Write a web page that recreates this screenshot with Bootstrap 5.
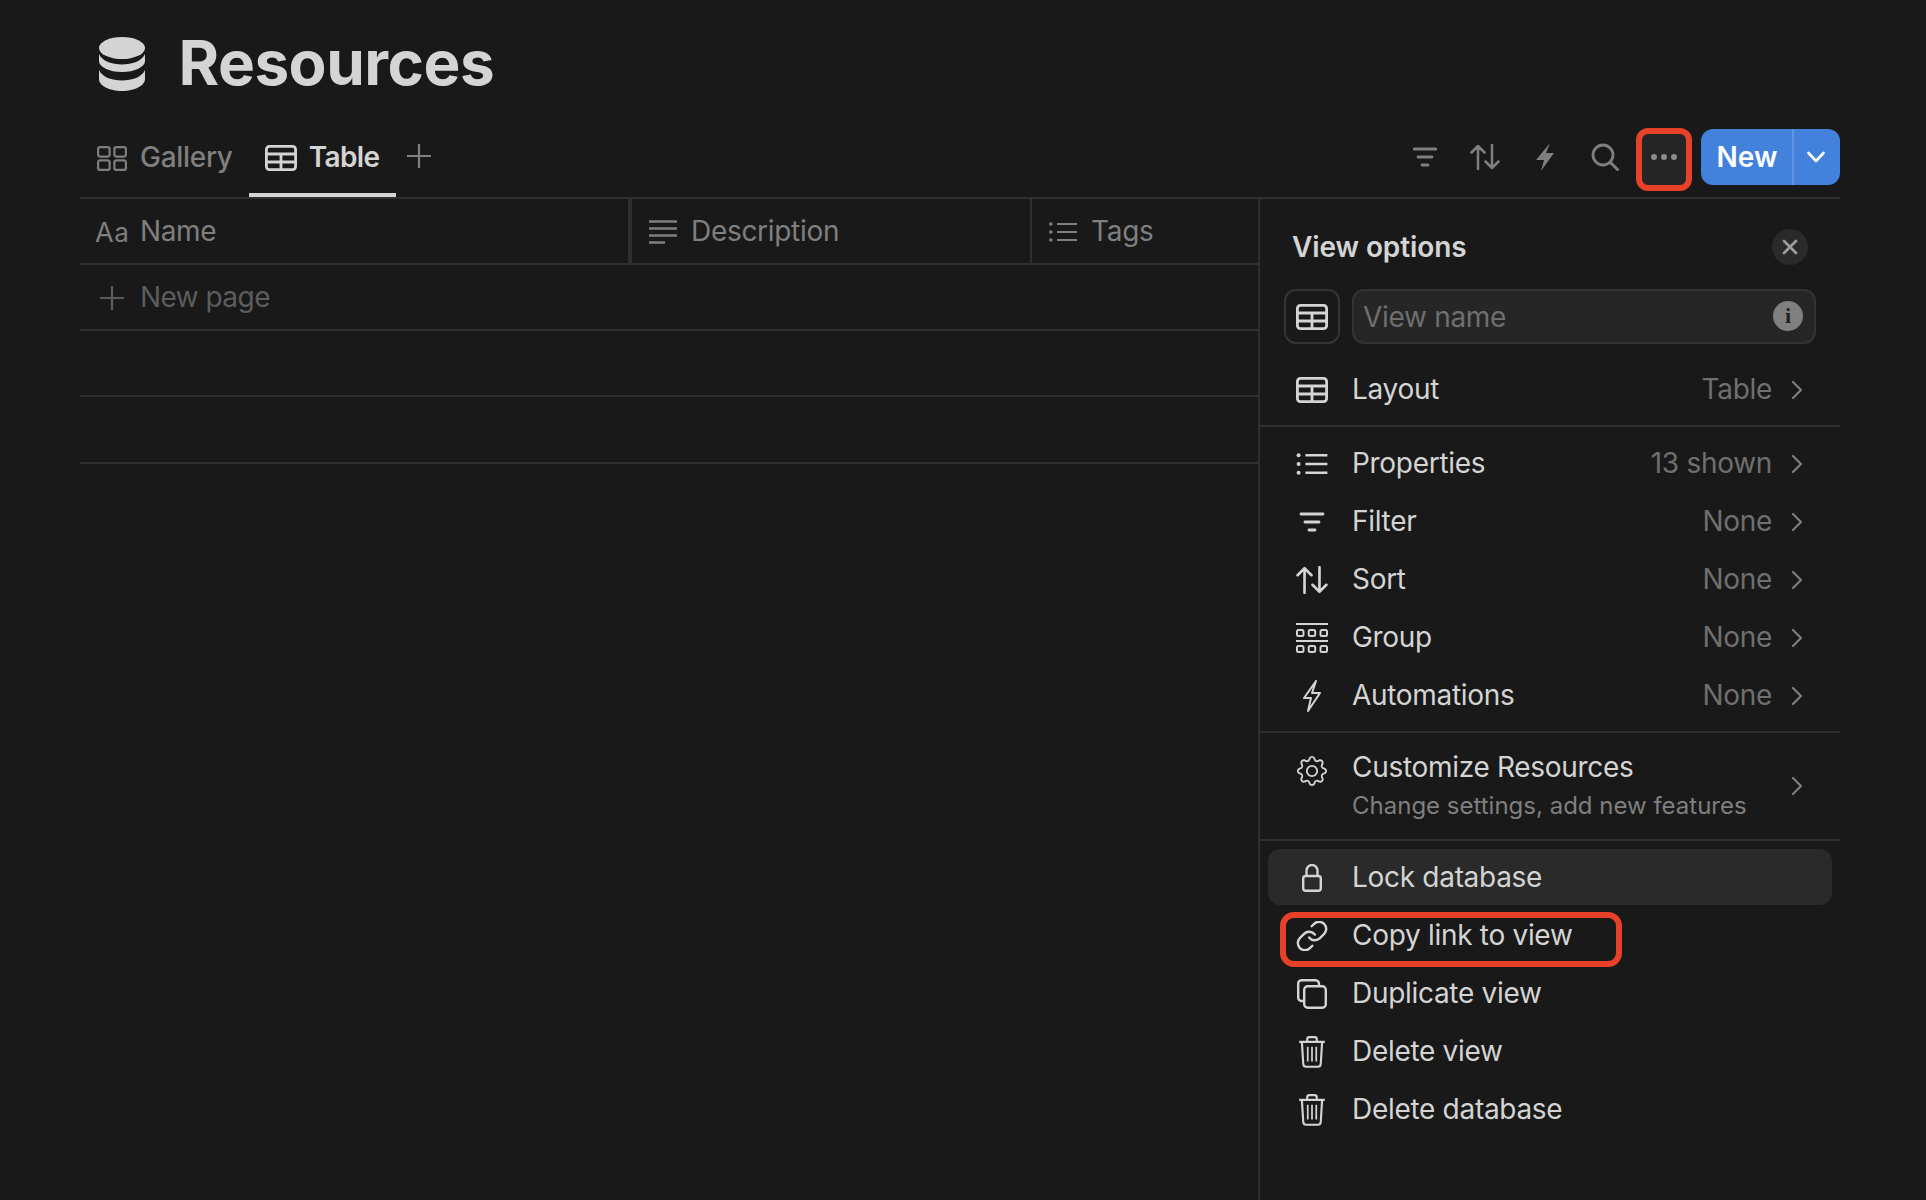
<!DOCTYPE html>
<html lang="en">
<head>
  <meta charset="UTF-8">
  <meta name="viewport" content="width=device-width, initial-scale=1.0">
  <title>Resources</title>
  <link href="https://cdn.jsdelivr.net/npm/bootstrap@5.3.0/dist/css/bootstrap.min.css" rel="stylesheet">
  <style>
    body {
      background: #191919;
      color: #d4d4d4;
      font-family: Inter, "Liberation Sans", sans-serif;
      font-size: 28px;
      line-height: 1.2;
      letter-spacing: -.3px;
    }
    svg { display: block; flex: none; }
    .page-wrap { padding: 0 86px 0 80px; }

    /* titre */
    .page-title { height: 127px; gap: 33.5px; padding: 0 0 0 19px; }
    .page-title h1 { font-size: 62px; font-weight: 700; margin: 0; letter-spacing: -.5px; color: #d4d4d4; }

    /* onglets + barre d'outils */
    .view-bar { height: 72px; border-bottom: 2px solid #2f2f2f; }
    .tab-link {
      height: 70px; padding: 0 16px 4px 17px; gap: 13px;
      color: #7f7f7f; font-weight: 500; border-bottom: 4px solid transparent;
    }
    .tab-link:hover { color: #7f7f7f; }
    .tab-link.active { padding: 0 16px 4px 16px; gap: 12px; color: #d4d4d4; font-weight: 600; letter-spacing: -.6px; border-bottom-color: #d4d4d4; }
    .tab-add { color: #7f7f7f; margin: 0 0 12px 11px; }
    .tool-bar { padding-top: 2px; }
    .tool-btn { width: 60px; height: 56px; padding-left: 2px; color: #7f7f7f; }
    .more-btn {
      width: 56px; height: 63px; margin: -1px 0 0 2px; padding-bottom: 5px;
      background: #252525; border: 6px solid #e8412a; border-radius: 12px; color: #8c8c8c;
    }
    .new-group { margin-left: 9px; }
    .new-group .btn {
      height: 56px; background: #4281dc; border: 0; color: #fff; font-size: 28px; font-weight: 600;
      border-radius: 12px; padding: 0;
    }
    .new-group .new-main { width: 92px; }
    .new-group .new-more { width: 48px; border-left: 2px solid #5f95e3; padding-right: 3px; }

    /* table */
    .db-table { width: 1178px; }
    .db-table table { table-layout: fixed; width: 100%; margin: 0; --bs-table-bg: transparent; --bs-table-color: #7f7f7f; }
    .db-table th, .db-table td { padding: 0; border-bottom: 2px solid #2f2f2f; font-weight: 500; vertical-align: middle; }
    .db-table th { height: 65px; padding-top: 2px; font-weight: 400; }
    .db-table td { height: 66px; }
    .db-table tr:last-child td { height: 67px; }
    .db-table th + th { border-left: 2px solid #2f2f2f; }
    .db-table th.after-name { border-left-width: 4px; }
    .col-name { width: 550px; }
    .col-desc { width: 401px; }
    .head-cell { gap: 14px; padding-left: 17px; }
    .head-cell.is-name { gap: 12px; padding-left: 15px; letter-spacing: -.4px; }
    .aa-mark { width: 33px; font-size: 27px; line-height: 1; letter-spacing: .5px; }
    .aa-mark span { font-size: 26px; }
    .new-row { gap: 12px; padding: 2px 0 0 16px; color: #5c5c5c; font-weight: 400; letter-spacing: -.55px; }

    /* panneau */
    .side-panel { width: 582px; border-left: 2px solid #2f2f2f; }
    .panel-head { height: 48px; margin: 25px 32px 0 32px; font-weight: 600; letter-spacing: -.1px; }
    .panel-close { width: 36px; height: 36px; background: #2a2a2a; border-radius: 50%; color: #9b9b9b; margin-top: -2px; }
    .panel-name { margin: 17px 24px 0 24px; gap: 12px; }
    .type-btn { width: 56px; height: 55px; border: 2px solid #343434; border-radius: 12px; }
    .name-input {
      height: 55px; padding: 0 50px 0 9px; font-size: 28px; letter-spacing: -.3px;
      background: #262626; border: 2px solid #333; border-radius: 12px; color: #d4d4d4;
    }
    .name-input::placeholder { color: #6f6f6f; }
    .info-dot {
      position: absolute; right: 13px; top: 12px; width: 30px; height: 30px; border-radius: 50%;
      background: #808080; color: #222; font: 700 22px/30px "Liberation Serif", serif; text-align: center;
    }
    .opt-list {
      --bs-list-group-bg: transparent; --bs-list-group-border-width: 0; --bs-list-group-color: #d4d4d4;
      --bs-list-group-border-radius: 0; --bs-list-group-item-padding-x: 0; --bs-list-group-item-padding-y: 0;
      --bs-list-group-action-hover-bg: transparent; --bs-list-group-action-hover-color: #d4d4d4;
      padding: 7px 8px;
    }
    .opt-first { margin-top: 9px; }
    .opt-list + .opt-list { border-top: 2px solid #2f2f2f; }
    .opt-row { height: 58px; padding: 2px 29px 0 28px; gap: 24px; }
    .opt-row.is-hover { background: #2a2a2a; border-radius: 12px; height: 56px; margin: 1px 0; }
    .opt-row.is-tall { height: 92px; padding-top: 0; }
    .opt-gear { align-self: flex-start; margin-top: 16px; }
    .opt-sub { font-size: 24px; letter-spacing: 0; color: #7f7f7f; margin-top: 7px; white-space: nowrap; }
    .opt-value { color: #6f6f6f; margin-right: -5px; }
    .opt-chev { color: #7f7f7f; }
    .copy-mark {
      position: absolute; left: 12px; top: 6px; width: 342px; height: 55px;
      border: 6px solid #e8412a; border-radius: 14px; pointer-events: none;
    }
  </style>
</head>
<body class="d-flex flex-column vh-100 overflow-hidden">

  <!-- Icones -->
  <svg width="0" height="0" class="position-absolute">
    <defs>
      <symbol id="i-table" viewBox="0 0 32 26"><g fill="none" stroke="currentColor" stroke-width="2.8"><rect x="1.4" y="1.4" width="29.2" height="23.2" rx="3"/><path d="M1 9h30M1 17h30M16 9v16"/></g></symbol>
      <symbol id="i-gallery" viewBox="0 0 30 25"><g fill="none" stroke="currentColor" stroke-width="2.2"><rect x="1.1" y="1.1" width="11.5" height="9.5" rx="2"/><rect x="17.4" y="1.1" width="11.5" height="9.5" rx="2"/><rect x="1.1" y="14.4" width="11.5" height="9.5" rx="2"/><rect x="17.4" y="14.4" width="11.5" height="9.5" rx="2"/></g></symbol>
      <symbol id="i-plus" viewBox="0 0 24 24"><path d="M12 0v24M0 12h24" stroke="currentColor" stroke-width="2.2" fill="none"/></symbol>
      <symbol id="i-filter" viewBox="0 0 24 20"><path d="M1 2h22M5 10h14M9 18h6" stroke="currentColor" stroke-width="2.8" stroke-linecap="round" fill="none"/></symbol>
      <symbol id="i-sort" viewBox="0 0 30 26"><path d="M8 25V2M1.5 8.5 8 2l6.500 6.500M22 1v23M15.500 17.500 22 24l6.500-6.500" stroke="currentColor" stroke-width="2.500" fill="none" stroke-linecap="round" stroke-linejoin="round"/></symbol>
      <symbol id="i-bolt" viewBox="0 0 18 28"><path d="M14 0 0 17h8L5 28l13-18h-8z" fill="currentColor"/></symbol>
      <symbol id="i-bolt-line" viewBox="0 0 20 32"><path d="M14 1 2 18h7L6 31 18 13h-8z" fill="none" stroke="currentColor" stroke-width="2" stroke-linejoin="round"/></symbol>
      <symbol id="i-search" viewBox="0 0 28 28"><circle cx="12" cy="12" r="10" fill="none" stroke="currentColor" stroke-width="2.800"/><path d="m19.500 19.500 7 7" stroke="currentColor" stroke-width="3" stroke-linecap="round"/></symbol>
      <symbol id="i-dots" viewBox="0 0 26 6"><circle cx="3" cy="3" r="3" fill="currentColor"/><circle cx="13" cy="3" r="3" fill="currentColor"/><circle cx="23" cy="3" r="3" fill="currentColor"/></symbol>
      <symbol id="i-chev-down" viewBox="0 0 18 12"><path d="m1.500 2 7.500 8 7.500-8" fill="none" stroke="currentColor" stroke-width="2.600" stroke-linecap="round" stroke-linejoin="round"/></symbol>
      <symbol id="i-chev-right" viewBox="0 0 12 20"><path d="m2 2 8 8-8 8" fill="none" stroke="currentColor" stroke-width="2.200" stroke-linecap="round" stroke-linejoin="round"/></symbol>
      <symbol id="i-close" viewBox="0 0 16 16"><path d="m2 2 12 12M14 2 2 14" stroke="currentColor" stroke-width="2.800" stroke-linecap="round"/></symbol>
      <symbol id="i-lines" viewBox="0 0 28 24"><path d="M0 1.500h28M0 8.500h28M0 15.500h28M0 22.500h16" stroke="currentColor" stroke-width="2.400" fill="none"/></symbol>
      <symbol id="i-list" viewBox="0 0 28 20"><g fill="currentColor"><circle cx="1.800" cy="2" r="1.800"/><circle cx="1.800" cy="10" r="1.800"/><circle cx="1.800" cy="18" r="1.800"/></g><path d="M8 2h20M8 10h20M8 18h20" stroke="currentColor" stroke-width="2.200" fill="none"/></symbol>
      <symbol id="i-group" viewBox="0 0 32 30"><g fill="none" stroke="currentColor" stroke-width="2"><path d="M0 1h32M0 18h32"/><rect x="1" y="7" width="6.500" height="6" rx="1.500"/><rect x="12.700" y="7" width="6.500" height="6" rx="1.500"/><rect x="24.500" y="7" width="6.500" height="6" rx="1.500"/><rect x="1" y="23" width="6.500" height="6" rx="1.500"/><rect x="12.700" y="23" width="6.500" height="6" rx="1.500"/><rect x="24.500" y="23" width="6.500" height="6" rx="1.500"/></g></symbol>
      <symbol id="i-gear" viewBox="0 0 16 16"><path fill="currentColor" d="M8 4.754a3.246 3.246 0 1 0 0 6.492 3.246 3.246 0 0 0 0-6.492zM5.754 8a2.246 2.246 0 1 1 4.492 0 2.246 2.246 0 0 1-4.492 0z"/><path fill="currentColor" d="M9.796 1.343c-.527-1.79-3.065-1.79-3.592 0l-.094.319a.873.873 0 0 1-1.255.52l-.292-.16c-1.64-.892-3.433.902-2.54 2.541l.159.292a.873.873 0 0 1-.52 1.255l-.319.094c-1.79.527-1.79 3.065 0 3.592l.319.094a.873.873 0 0 1 .52 1.255l-.16.292c-.892 1.64.901 3.434 2.541 2.54l.292-.159a.873.873 0 0 1 1.255.52l.094.319c.527 1.79 3.065 1.79 3.592 0l.094-.319a.873.873 0 0 1 1.255-.52l.292.16c1.64.893 3.434-.902 2.54-2.541l-.159-.292a.873.873 0 0 1 .52-1.255l.319-.094c1.79-.527 1.79-3.065 0-3.592l-.319-.094a.873.873 0 0 1-.52-1.255l.16-.292c.893-1.64-.902-3.433-2.541-2.54l-.292.159a.873.873 0 0 1-1.255-.52l-.094-.319zm-2.633.283c.246-.835 1.428-.835 1.674 0l.094.319a1.873 1.873 0 0 0 2.693 1.115l.291-.16c.764-.415 1.6.42 1.184 1.185l-.159.292a1.873 1.873 0 0 0 1.116 2.692l.318.094c.835.246.835 1.428 0 1.674l-.319.094a1.873 1.873 0 0 0-1.115 2.693l.16.291c.415.764-.42 1.6-1.185 1.184l-.291-.159a1.873 1.873 0 0 0-2.693 1.116l-.094.318c-.246.835-1.428.835-1.674 0l-.094-.319a1.873 1.873 0 0 0-2.692-1.115l-.292.16c-.764.415-1.6-.42-1.184-1.185l.159-.291A1.873 1.873 0 0 0 1.945 8.93l-.319-.094c-.835-.246-.835-1.428 0-1.674l.319-.094A1.873 1.873 0 0 0 3.06 4.377l-.16-.292c-.415-.764.42-1.6 1.185-1.184l.292.159a1.873 1.873 0 0 0 2.692-1.115l.094-.319z"/></symbol>
      <symbol id="i-lock" viewBox="0 0 20 28"><g fill="none" stroke="currentColor" stroke-width="2.400"><rect x="1.200" y="12" width="17.600" height="14.800" rx="2.500"/><path d="M4.500 12V6.500a5.500 5.500 0 0 1 11 0V12"/></g></symbol>
      <symbol id="i-link" viewBox="1.500 1.500 21 21"><g fill="none" stroke="currentColor" stroke-width="1.700" stroke-linecap="round" stroke-linejoin="round"><path d="M10 13a5 5 0 0 0 7.540.54l3-3a5 5 0 0 0-7.070-7.070l-1.720 1.710"/><path d="M14 11a5 5 0 0 0-7.540-.54l-3 3a5 5 0 0 0 7.070 7.070l1.710-1.710"/></g></symbol>
      <symbol id="i-copy" viewBox="0 0 30 30"><g fill="none" stroke="currentColor" stroke-width="2.400" stroke-linejoin="round"><path d="M7 22H5a3.500 3.500 0 0 1-3.800-3.500V5A3.500 3.500 0 0 1 5 1.200h13.500A3.500 3.500 0 0 1 22 5v2"/><rect x="7.200" y="7.200" width="21.600" height="21.600" rx="3.500"/></g></symbol>
      <symbol id="i-trash" viewBox="0 0 26 30"><g fill="none" stroke="currentColor" stroke-width="2" stroke-linejoin="round"><path d="M1 5.500h24M8.500 5.500V3A2 2 0 0 1 10.500 1h5a2 2 0 0 1 2 2v2.500M3.500 5.500l1.300 20.500a2.800 2.800 0 0 0 2.800 2.800h10.800a2.800 2.800 0 0 0 2.800-2.800l1.300-20.500"/><path d="M9 10v14M13 10v14M17 10v14" stroke-width="1.600"/></g></symbol>
      <symbol id="i-db" viewBox="0 0 46 54"><g fill="currentColor"><ellipse cx="23" cy="11" rx="23" ry="11"/><path d="M0 17v7c0 6 10.300 11 23 11s23-5 23-11v-7c-3 7-13 10.500-23 10.500S3 24 0 17z"/><path d="M0 33v9c0 6.600 10.300 12 23 12s23-5.400 23-12v-9c-3 7-13 10.500-23 10.500S3 40 0 33z"/></g></symbol>
    </defs>
  </svg>

  <div class="page-wrap d-flex flex-column flex-grow-1 overflow-hidden">
    <!-- Titre -->
    <header class="page-title d-flex align-items-center">
      <svg width="46" height="54"><use href="#i-db"/></svg>
      <h1>Resources</h1>
    </header>

    <!-- Onglets et actions -->
    <div class="view-bar d-flex justify-content-between align-items-start">
      <nav class="nav align-items-center">
        <a class="nav-link tab-link d-flex align-items-center" href="#"><svg width="30" height="25"><use href="#i-gallery"/></svg>Gallery</a>
        <a class="nav-link tab-link active d-flex align-items-center" href="#"><svg width="32" height="26"><use href="#i-table"/></svg>Table</a>
        <svg class="tab-add" width="24" height="24"><use href="#i-plus"/></svg>
      </nav>
      <div class="tool-bar d-flex align-items-start">
        <div class="tool-btn d-flex align-items-center justify-content-center"><svg width="24" height="20"><use href="#i-filter"/></svg></div>
        <div class="tool-btn d-flex align-items-center justify-content-center"><svg width="30" height="26"><use href="#i-sort"/></svg></div>
        <div class="tool-btn d-flex align-items-center justify-content-center"><svg width="18" height="28"><use href="#i-bolt"/></svg></div>
        <div class="tool-btn d-flex align-items-center justify-content-center"><svg width="28" height="28"><use href="#i-search"/></svg></div>
        <div class="more-btn d-flex align-items-center justify-content-center"><svg width="26" height="6"><use href="#i-dots"/></svg></div>
        <div class="btn-group new-group">
          <button type="button" class="btn new-main">New</button>
          <button type="button" class="btn new-more d-flex align-items-center justify-content-center"><svg width="18" height="12"><use href="#i-chev-down"/></svg></button>
        </div>
      </div>
    </div>

    <div class="d-flex flex-grow-1 overflow-hidden">
      <!-- Table -->
      <section class="db-table flex-shrink-0">
        <table class="table">
          <colgroup><col class="col-name"><col class="col-desc"><col></colgroup>
          <thead>
            <tr>
              <th><div class="head-cell is-name d-flex align-items-center"><div class="aa-mark">A<span>a</span></div>Name</div></th>
              <th class="after-name"><div class="head-cell d-flex align-items-center"><svg width="28" height="24"><use href="#i-lines"/></svg>Description</div></th>
              <th><div class="head-cell d-flex align-items-center"><svg width="28" height="20"><use href="#i-list"/></svg>Tags</div></th>
            </tr>
          </thead>
          <tbody>
            <tr><td colspan="3"><div class="new-row d-flex align-items-center"><svg class="mx-1" width="24" height="24"><use href="#i-plus"/></svg><span>New page</span></div></td></tr>
            <tr><td colspan="3"></td></tr>
            <tr><td colspan="3"></td></tr>
          </tbody>
        </table>
      </section>

      <!-- View options -->
      <aside class="side-panel flex-shrink-0">
        <div class="panel-head d-flex justify-content-between align-items-center">
          <span>View options</span>
          <div class="panel-close d-flex align-items-center justify-content-center"><svg width="16" height="16"><use href="#i-close"/></svg></div>
        </div>
        <div class="panel-name d-flex">
          <div class="type-btn d-flex align-items-center justify-content-center flex-shrink-0"><svg width="32" height="26"><use href="#i-table"/></svg></div>
          <div class="position-relative flex-grow-1">
            <input class="form-control name-input" type="text" placeholder="View name">
            <div class="info-dot">i</div>
          </div>
        </div>

        <div class="list-group opt-list opt-first">
          <a class="list-group-item opt-row d-flex align-items-center" href="#">
            <svg width="32" height="26"><use href="#i-table"/></svg><span class="flex-grow-1">Layout</span><span class="opt-value">Table</span><svg class="opt-chev" width="12" height="20"><use href="#i-chev-right"/></svg>
          </a>
        </div>
        <div class="list-group opt-list">
          <a class="list-group-item opt-row d-flex align-items-center" href="#">
            <svg width="32" height="22"><use href="#i-list"/></svg><span class="flex-grow-1">Properties</span><span class="opt-value">13 shown</span><svg class="opt-chev" width="12" height="20"><use href="#i-chev-right"/></svg>
          </a>
          <a class="list-group-item opt-row d-flex align-items-center" href="#">
            <svg width="32" height="20"><use href="#i-filter"/></svg><span class="flex-grow-1">Filter</span><span class="opt-value">None</span><svg class="opt-chev" width="12" height="20"><use href="#i-chev-right"/></svg>
          </a>
          <a class="list-group-item opt-row d-flex align-items-center" href="#">
            <svg width="32" height="28"><use href="#i-sort"/></svg><span class="flex-grow-1">Sort</span><span class="opt-value">None</span><svg class="opt-chev" width="12" height="20"><use href="#i-chev-right"/></svg>
          </a>
          <a class="list-group-item opt-row d-flex align-items-center" href="#">
            <svg width="32" height="30"><use href="#i-group"/></svg><span class="flex-grow-1">Group</span><span class="opt-value">None</span><svg class="opt-chev" width="12" height="20"><use href="#i-chev-right"/></svg>
          </a>
          <a class="list-group-item opt-row d-flex align-items-center" href="#">
            <svg width="32" height="32"><use href="#i-bolt-line"/></svg><span class="flex-grow-1">Automations</span><span class="opt-value">None</span><svg class="opt-chev" width="12" height="20"><use href="#i-chev-right"/></svg>
          </a>
        </div>
        <div class="list-group opt-list">
          <a class="list-group-item opt-row is-tall d-flex align-items-center" href="#">
            <svg class="opt-gear" width="32" height="30"><use href="#i-gear"/></svg>
            <span class="flex-grow-1"><span class="d-block">Customize Resources</span><span class="d-block opt-sub">Change settings, add new features</span></span>
            <svg class="opt-chev" width="12" height="20"><use href="#i-chev-right"/></svg>
          </a>
        </div>
        <div class="list-group opt-list">
          <a class="list-group-item opt-row is-hover d-flex align-items-center" href="#"><svg width="32" height="28"><use href="#i-lock"/></svg><span>Lock database</span></a>
          <a class="list-group-item opt-row d-flex align-items-center" href="#"><svg width="32" height="30"><use href="#i-link"/></svg><span>Copy link to view</span><span class="copy-mark"></span></a>
          <a class="list-group-item opt-row d-flex align-items-center" href="#"><svg width="32" height="30"><use href="#i-copy"/></svg><span>Duplicate view</span></a>
          <a class="list-group-item opt-row d-flex align-items-center" href="#"><svg width="32" height="32"><use href="#i-trash"/></svg><span>Delete view</span></a>
          <a class="list-group-item opt-row d-flex align-items-center" href="#"><svg width="32" height="32"><use href="#i-trash"/></svg><span>Delete database</span></a>
        </div>
      </aside>
    </div>
  </div>

  <script src="https://cdn.jsdelivr.net/npm/bootstrap@5.3.0/dist/js/bootstrap.bundle.min.js"></script>
</body>
</html>
